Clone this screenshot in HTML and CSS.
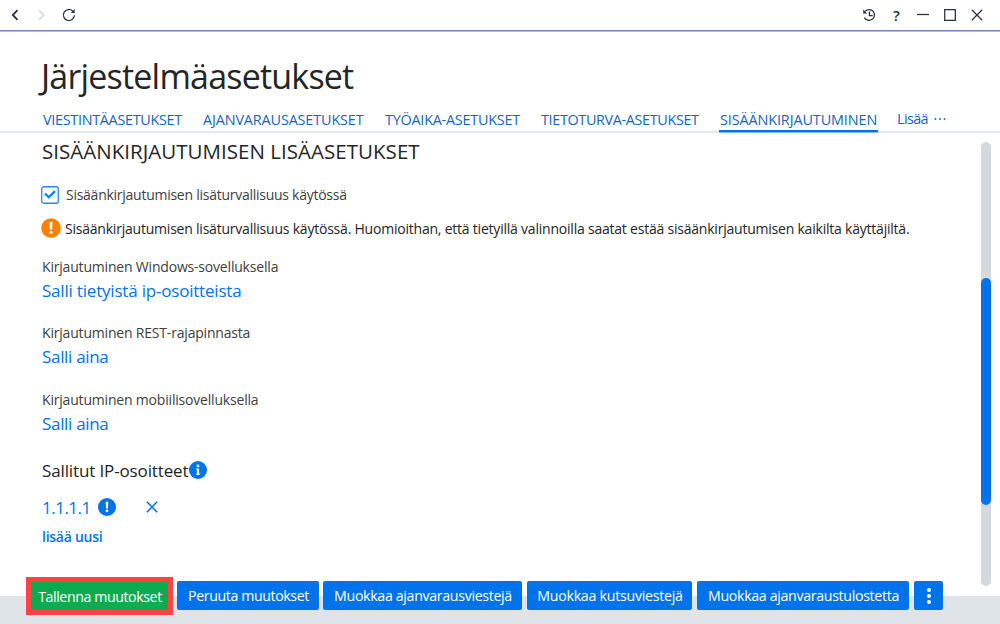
FILE: index.html
```
<!DOCTYPE html>
<html lang="fi"><head><meta charset="utf-8"><title>Järjestelmäasetukset</title><link rel="stylesheet" href="styles.css"></head>
<body>
<header class="topbar">
<nav class="history">
<svg width="10" height="12" viewBox="0 0 10 12"><path d="M7.5 1.2 2.8 6l4.7 4.8" class="ink bold"/></svg>
<svg width="10" height="12" viewBox="0 0 10 12"><path d="m3 1.2 4.7 4.8L3 10.8" class="faint"/></svg>
<svg width="14" height="14" viewBox="0 0 14 14"><path d="M12.4 7.3A5.5 5.5 0 1 1 10.8 3.1" class="ink"/><path d="M12.7 1v4H8.7z" class="solid"/></svg>
</nav>
<nav class="window">
<svg width="14" height="14" viewBox="0 0 14 14"><path d="M3.2 3.2A5.4 5.4 0 1 1 2.4 9.6M7.4 3.6v3.9h3.3" class="ink"/><path d="M1.2 1.6v4h4z" class="solid"/></svg>
<span class="help">?</span>
<svg width="12" height="12" viewBox="0 0 12 12"><path d="M0 5.5h12" class="ink"/></svg>
<svg width="12" height="12" viewBox="0 0 12 12"><path d="M.7.7h10.6v10.6H.7z" class="ink"/></svg>
<svg width="12" height="12" viewBox="0 0 12 12"><path d="m.8.8 10.4 10.4M11.2.8.8 11.2" class="ink"/></svg>
</nav>
</header>
<h1 class="title">Järjestelmäasetukset</h1>
<nav class="tabs">
<a class="tab messages">VIESTINTÄASETUKSET</a><a class="tab booking">AJANVARAUSASETUKSET</a><a class="tab worktime">TYÖAIKA-ASETUKSET</a><a class="tab security">TIETOTURVA-ASETUKSET</a><a class="tab active">SISÄÄNKIRJAUTUMINEN</a><a class="tab overflow">Lisää<svg width="12" height="4" viewBox="0 0 12 4"><circle cx="1.5" cy="2" r=".9"/><circle cx="6" cy="2" r=".9"/><circle cx="10.5" cy="2" r=".9"/></svg></a>
</nav>
<main class="content">
<section class="settings">
<h2 class="heading">SISÄÄNKIRJAUTUMISEN LISÄASETUKSET</h2>
<label class="check"><svg width="18" height="18" viewBox="0 0 18 18"><rect x=".75" y=".75" width="16.5" height="16.5" rx="2" class="box"/><path d="m4 7.5 3.8 3.7 6.2-6.1" class="tick"/></svg><span>Sisäänkirjautumisen lisäturvallisuus käytössä</span></label>
<p class="warning"><svg width="20" height="20" viewBox="0 0 20 20"><circle cx="10" cy="10" r="9.8" fill="#ff8000"/><path d="M8.5 4h3l-.4 7.6H8.9z" fill="#fff"/><circle cx="10" cy="14.3" r="1.5" fill="#fff"/></svg><span>Sisäänkirjautumisen lisäturvallisuus käytössä. Huomioithan, että tietyillä valinnoilla saatat estää sisäänkirjautumisen kaikilta käyttäjiltä.</span></p>
<div class="field"><p class="name">Kirjautuminen Windows-sovelluksella</p><a class="value">Salli tietyistä ip-osoitteista</a></div>
<div class="field"><p class="name">Kirjautuminen REST-rajapinnasta</p><a class="value short">Salli aina</a></div>
<div class="field"><p class="name">Kirjautuminen mobiilisovelluksella</p><a class="value short">Salli aina</a></div>
<h3 class="subheading"><span>Sallitut IP-osoitteet</span><svg width="18" height="18" viewBox="0 0 18 18"><circle cx="9" cy="9" r="9" fill="#0073eb"/><circle cx="9" cy="4.9" r="1.4" fill="#fff"/><path d="M7 7.4h3.1v5.3h1v1.1H7v-1.1h.9V8.5H7z" fill="#fff"/></svg></h3>
<div class="address"><span>1.1.1.1</span><svg width="18" height="18" viewBox="0 0 18 18"><circle cx="9" cy="9" r="9" fill="#0073eb"/><path d="M7.7 3.8h2.6l-.4 6.6H8.1z" fill="#fff"/><circle cx="9" cy="12.9" r="1.4" fill="#fff"/></svg><svg class="remove" width="12" height="12" viewBox="0 0 12 12"><path d="m.8.8 10.4 10.4M11.2.8.8 11.2"/></svg></div>
<a class="add">lisää uusi</a>
</section>
<div class="scroll"><div class="thumb"></div></div>
</main>
<footer class="actions">
<div class="highlight"><button class="btn save">Tallenna muutokset</button></div>
<button class="btn cancel">Peruuta muutokset</button><button class="btn edit-booking">Muokkaa ajanvarausviestejä</button><button class="btn edit-invite">Muokkaa kutsuviestejä</button><button class="btn edit-print">Muokkaa ajanvaraustulostetta</button><button class="btn more"><svg width="6" height="18" viewBox="0 0 6 18"><circle cx="3" cy="3" r="2"/><circle cx="3" cy="9" r="2"/><circle cx="3" cy="15" r="2"/></svg></button>
</footer>
</body></html>
```
FILE: styles.css
```
*{box-sizing:border-box}
body{margin:0;width:1000px;height:624px;overflow:hidden;background:#fff;color:#252525;font-family:"Open Sans","Noto Sans",sans-serif;font-size:14px;white-space:nowrap;display:flex;flex-direction:column}
h1,h2,h3,p{margin:0;font-weight:400}
svg{flex:none;display:block}
.topbar{height:31px;flex:none;display:flex;justify-content:space-between;align-items:center;padding:0 17px 0 10px;border-bottom:1px solid #6f87c2;box-shadow:0 1px #b4c0e0}
.history{display:flex;align-items:center;gap:16px}
.window{display:flex;align-items:center;gap:15px}
.ink{fill:none;stroke:#26303e;stroke-width:1.25}
.bold{stroke-width:1.8}
.faint{fill:none;stroke:#cfdae6;stroke-width:1.5}
.solid{fill:#26303e}
.help{font-size:15px;font-weight:600;line-height:18px;width:11px;text-align:center;color:#26303e;padding-bottom:1px}
.title{flex:none;font-size:34px;letter-spacing:-.8px;line-height:50px;height:76px;padding:20px 0 0 41px}
.tabs{height:26px;flex:none;display:flex;border-bottom:2px solid #e3e8ec;padding-left:43px;font-size:14.4px;line-height:25px;color:#1565c0}
.tab{height:25px;flex:none}
.messages{width:160px;letter-spacing:-.3px}
.booking{width:182px;letter-spacing:-.13px}
.worktime{width:156px;letter-spacing:-.23px}
.security{width:178px;letter-spacing:-.35px}
.active{width:159px;padding-left:1px;letter-spacing:-.1px;border-bottom:2px solid #0073eb;box-shadow:0 1px #84b7f5}
.overflow{display:flex;align-items:center;gap:6px;margin-left:19px;letter-spacing:-.6px;height:23px;line-height:22px;fill:currentColor}
.content{flex:none;display:flex;justify-content:space-between;height:463px}
.settings{padding-left:42px;flex:1}
.heading{font-size:20.5px;letter-spacing:.03px;line-height:37px;height:43px}
.check,.warning{margin-left:-1px;display:flex;align-items:center}
.check{gap:7px;height:37px;color:#404040;letter-spacing:-.26px}
.box{fill:#fff;stroke:#2b88f0;stroke-width:1.3}
.tick{fill:none;stroke:#0080ff;stroke-width:2.3}
.warning{gap:4px;height:30px;margin-bottom:1px;letter-spacing:-.217px}
.field{height:66.4px;padding-top:11px}
.name{line-height:23px;color:#404040;letter-spacing:-.19px}
.value{display:block;font-size:17px;line-height:25px;color:#0073eb;letter-spacing:-.2px}
.short{letter-spacing:-.32px}
.subheading{margin-top:12px;font-size:17px;letter-spacing:-.13px;display:flex;align-items:center;gap:1px;height:30px}
.address{font-size:17px;letter-spacing:-.5px;display:flex;align-items:center;gap:7px;color:#0073eb;height:44px}
.remove{margin-left:23px;fill:none;stroke:#0073eb;stroke-width:1.5}
.add{display:block;margin-top:-2px;line-height:19px;color:#0073eb;font-weight:600;letter-spacing:-.27px}
.scroll{width:10px;height:444px;margin:9px 9px 0 0;border-radius:5px;background:#d3d9df;padding-top:135.5px}
.thumb{height:227px;border-radius:5px;background:#0073eb}
.actions{flex:none;height:28px;display:flex;align-items:flex-start;gap:5px;padding-left:26px;background:#dfe4e9}
.highlight{width:147px;height:38px;margin:-19px -1px 0 0;padding:5px;background:#ff4242}
.btn{flex:none;font:14.2px/29px "Open Sans","Noto Sans",sans-serif;letter-spacing:-.33px;color:#fff;background:#0073eb;border:0;border-radius:2px;padding:0 0 0 1px;height:29px;margin-top:-15px}
.highlight .save{width:137px;height:28px;margin:0;border-radius:0;background:#0cab50;letter-spacing:-.42px}
.cancel{width:142px;letter-spacing:-.4px}
.edit-booking{width:199px;margin-left:-1px}
.edit-invite{width:165px;letter-spacing:-.26px}
.edit-print{width:212px}
.more{width:29px;padding:0;display:flex;align-items:center;justify-content:center;fill:#fff}
```
